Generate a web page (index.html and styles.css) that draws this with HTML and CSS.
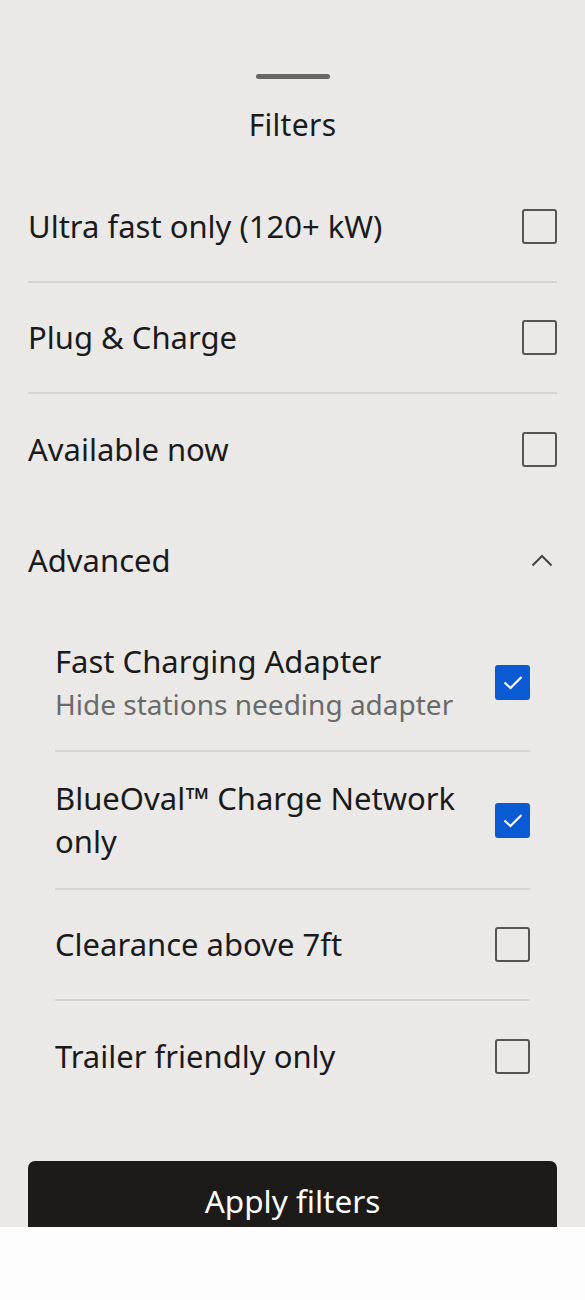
FILE: index.html
```html
<!DOCTYPE html>
<html lang="en">
<head>
<meta charset="utf-8">
<title>Filters</title>
<link rel="stylesheet" href="styles.css">
</head>
<body>
<div class="sheet">
  <div class="handle"></div>
  <h1 class="title">Filters</h1>

  <div class="row divided">
    <span class="label">Ultra fast only (120+ kW)</span>
    <span class="box"></span>
  </div>
  <div class="row divided">
    <span class="label">Plug &amp; Charge</span>
    <span class="box"></span>
  </div>
  <div class="row">
    <span class="label">Available now</span>
    <span class="box"></span>
  </div>
  <div class="row">
    <span class="label">Advanced</span>
    <svg class="chevron" width="22" height="13" viewBox="0 0 22 13"><path d="M1.5 11.5 L11 2 L20.5 11.5" fill="none" stroke="#444" stroke-width="2"/></svg>
  </div>

  <div class="advanced">
    <div class="subrow divided">
      <div class="text">
        <div class="label">Fast Charging Adapter</div>
        <div class="hint">Hide stations needing adapter</div>
      </div>
      <span class="box checked"><svg width="20" height="15" viewBox="0 0 20 15"><path d="M1.5 7.5 L7.5 13 L18.5 2" fill="none" stroke="#fff" stroke-width="2.2"/></svg></span>
    </div>
    <div class="subrow divided tall">
      <div class="text">
        <div class="label">BlueOval™ Charge Network only</div>
      </div>
      <span class="box checked"><svg width="20" height="15" viewBox="0 0 20 15"><path d="M1.5 7.5 L7.5 13 L18.5 2" fill="none" stroke="#fff" stroke-width="2.2"/></svg></span>
    </div>
    <div class="subrow divided single">
      <div class="text"><div class="label">Clearance above 7ft</div></div>
      <span class="box"></span>
    </div>
    <div class="subrow single">
      <div class="text"><div class="label">Trailer friendly only</div></div>
      <span class="box"></span>
    </div>
  </div>

  <button class="apply">Apply filters</button>
</div>
<div class="home-bar"></div>
</body>
</html>
```

FILE: styles.css
```css
* { box-sizing: border-box; }
html, body {
  margin: 0;
  padding: 0;
  background: #ebe9e7;
  font-family: "Noto Sans", "Open Sans", sans-serif;
  color: #1a1a1a;
}
.sheet {
  padding: 74px 28px 0;
  display: flex;
  flex-direction: column;
}
.handle {
  align-self: center;
  width: 74px;
  height: 5px;
  border-radius: 3px;
  background: #666;
}
.title {
  margin: 23px 0 24px;
  font-size: 30px;
  font-weight: 400;
  line-height: 46px;
  text-align: center;
  letter-spacing: 0.3px;
}
.row {
  height: 111px;
  display: flex;
  align-items: center;
  justify-content: space-between;
}
.divided { border-bottom: 2px solid #d6d4d2; }
.label { font-size: 31px; line-height: 43px; }
.box {
  flex: none;
  width: 35px;
  height: 35px;
  border: 2px solid #555;
  border-radius: 3px;
  display: flex;
  align-items: center;
  justify-content: center;
}
.box.checked {
  background: #0a5bd3;
  border-color: #0a5bd3;
}
.chevron { margin-right: 4px; }
.advanced {
  padding: 0 27px;
  display: flex;
  flex-direction: column;
}
.subrow {
  display: flex;
  align-items: center;
  justify-content: space-between;
  padding: 24px 0 25px;
}
.subrow .text { max-width: 420px; }
.subrow.tall { padding: 25px 0; }
.subrow.single { height: 111px; padding: 0; }
.hint { font-size: 28px; line-height: 42px; color: #6a6a6a; }
.apply {
  margin: 49px 0 0;
  height: 78px;
  border: none;
  border-radius: 7px;
  background: #1c1b19;
  color: #fff;
  font-family: inherit;
  font-size: 31.5px;
  padding: 0;
}
.home-bar {
  position: fixed;
  left: 0;
  right: 0;
  bottom: 0;
  height: 73px;
  background: #fdfdfd;
}
```
